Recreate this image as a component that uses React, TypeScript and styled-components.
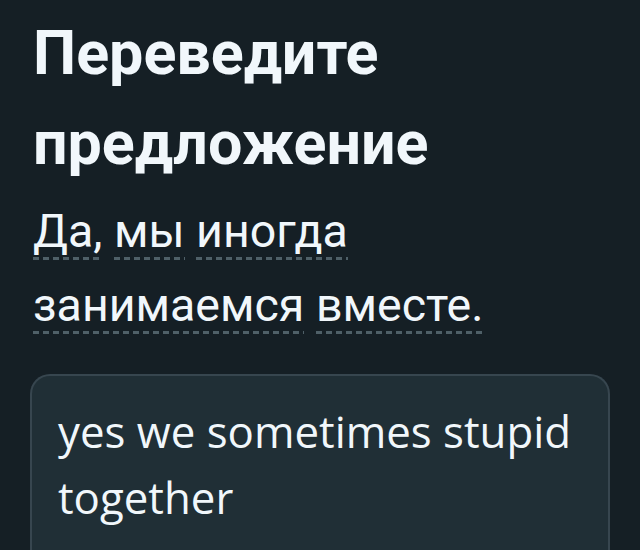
import React from "react";
import styled, { createGlobalStyle } from "styled-components";

const Global = createGlobalStyle`
  html, body {
    margin: 0;
    padding: 0;
    background: #151f25;
    overflow: hidden;
  }
`;

const Screen = styled.div`
  width: 640px;
  height: 550px;
  box-sizing: border-box;
  padding: 8px 30px 0 30px;
  display: flex;
  flex-direction: column;
  background: #151f25;
  overflow: hidden;
`;

const Title = styled.h1`
  margin: 0 0 0 3px;
  font-family: Roboto, "Liberation Sans", sans-serif;
  font-weight: 700;
  font-size: 61px;
  line-height: 90px;
  color: #f1f7fb;
`;

const Sentence = styled.p`
  margin: 6px 0 0 3px;
  font-family: Roboto, "Liberation Sans", sans-serif;
  font-weight: 400;
  font-size: 46.5px;
  line-height: 74px;
  color: #f1f7fb;
  width: 540px;
`;

/* a tappable word: dashed hint line under the glyphs */
const Word = styled.span`
  display: inline-block;
  line-height: 58px;
  background-image: linear-gradient(to right, #4f6068 0 6px, transparent 6px 10px);
  background-size: 10px 3px;
  background-repeat: repeat-x;
  background-position: 0 100%;
`;

const AnswerBox = styled.div`
  margin-top: 32px;
  flex: 1;
  box-sizing: border-box;
  border: 2px solid #37464f;
  border-bottom: none;
  border-radius: 20px 20px 0 0;
  background: #202f36;
  padding: 22px 26px 0 26px;
  font-family: "Open Sans", "Noto Sans", sans-serif;
  font-size: 43.8px;
  line-height: 66px;
  color: #f1f7fb;
`;

const words = [
  ["Да,", "мы", "иногда"],
  ["занимаемся", "вместе."],
];

export default function App() {
  return (
    <Screen>
      <Global />
      <Title>
        Переведите
        <br />
        предложение
      </Title>
      <Sentence>
        {words.map((line, i) => (
          <React.Fragment key={i}>
            {line.map((w, j) => (
              <React.Fragment key={w}>
                <Word>{w}</Word>
                {j < line.length - 1 ? " " : null}
              </React.Fragment>
            ))}
            {i < words.length - 1 ? <br /> : null}
          </React.Fragment>
        ))}
      </Sentence>
      <AnswerBox>yes we sometimes stupid together</AnswerBox>
    </Screen>
  );
}
